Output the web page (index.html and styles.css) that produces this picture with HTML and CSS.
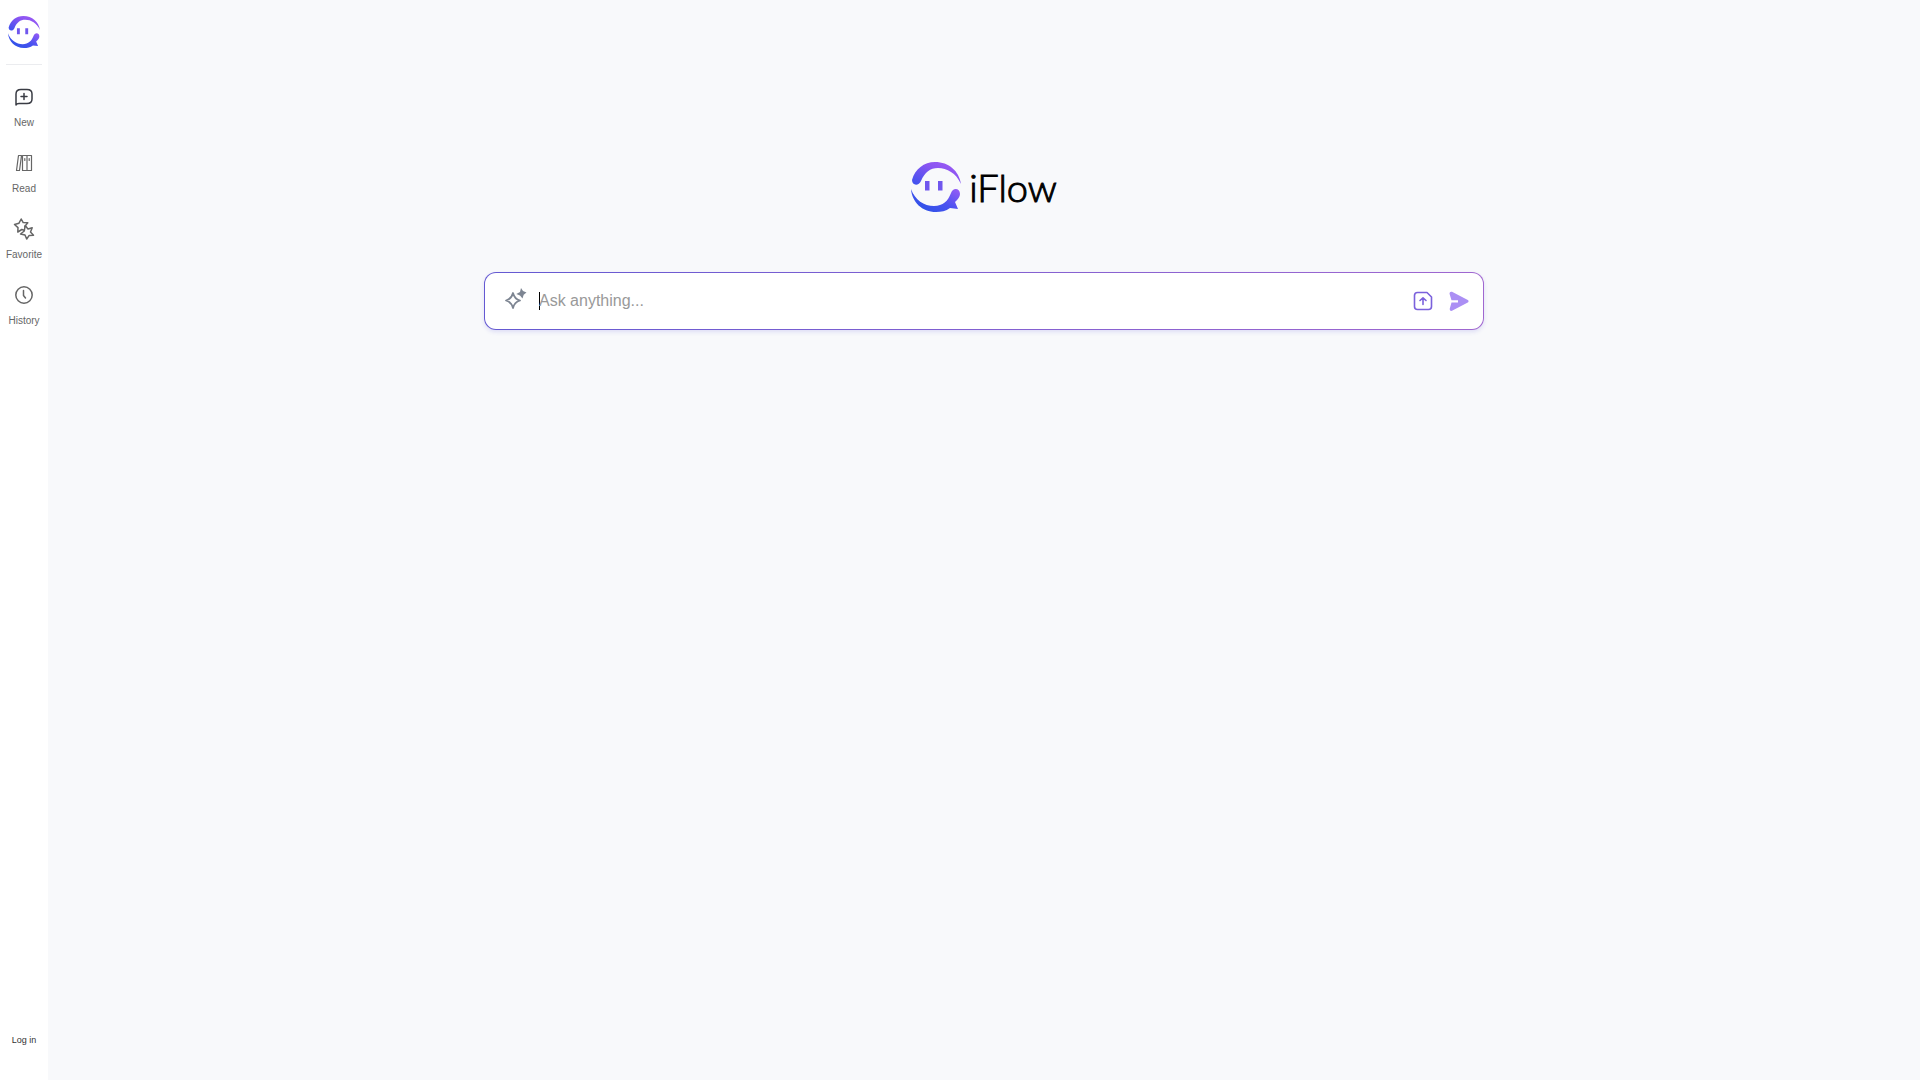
FILE: index.html
```
<!DOCTYPE html>
<html lang="en">
<head>
<meta charset="utf-8">
<title>iFlow</title>
<meta name="viewport" content="width=device-width, initial-scale=1">
<link rel="stylesheet" href="styles.css">
</head>
<body>
<!-- shared shapes -->
<svg class="defs" width="0" height="0" aria-hidden="true">
  <defs>
    <linearGradient id="markTop" x1="0" y1="1" x2="1" y2="0">
      <stop offset="0" stop-color="#3b52ee"/>
      <stop offset="0.6" stop-color="#8a55f2"/>
      <stop offset="1" stop-color="#a35cf4"/>
    </linearGradient>
    <linearGradient id="markBottom" x1="0" y1="0.8" x2="1" y2="0">
      <stop offset="0" stop-color="#2a52e6"/>
      <stop offset="0.5" stop-color="#4a52f0"/>
      <stop offset="1" stop-color="#9a5cf6"/>
    </linearGradient>
    <symbol id="mark" viewBox="0 0 50 50">
      <path fill="url(#markTop)" d="M1 18C4 7 13 0 24 0C38 0 48 9 50 22C45 11 36 6 27 6C19 6 14 10 10 19C8 24 1 24 1 18Z"/>
      <path fill="url(#markBottom)" d="M0 27C4 38 13 44 23 44C32 44 37 39 40 31C42 25 49 26 49 32C49 35 47 37 44 40L47 47L39 46C35 49 30 50 25 50C11 50 1 40 0 27Z"/>
      <path fill="#7057ee" d="M14 19h4.500v9.500h-4.500zM27 19h4.500v9.500h-4.500z"/>
    </symbol>
  </defs>
</svg>
<div class="page">
  <aside class="sidebar">
    <a class="home" href="#" aria-label="iFlow">
      <svg width="32" height="32"><use href="#mark"/></svg>
    </a>
    <nav class="menu">
      <a class="item" href="#">
        <svg class="dark" width="20" height="20" viewBox="0 0 20 20"><path d="M2 18V7Q2 2.500 7 2.500H13Q18 2.500 18 7V12Q18 16.500 13 16.500H5Q2.500 16.500 2 18M10 6.500v6M7 9.500h6"/></svg>
        <span>New</span>
      </a>
      <a class="item" href="#">
        <svg class="thin" width="20" height="20" viewBox="0 0 20 20"><path d="M4.500 2.500H7.500L5.500 17.500H2.500ZM8.500 2.500H17.500V17.500H8.500ZM13 2.500V17.500M10.800 5.500v2M15.200 5.500v2"/></svg>
        <span>Read</span>
      </a>
      <a class="item" href="#">
        <svg width="20" height="20" viewBox="0 0 20 20">
          <path d="M7.200 0L9.200 3.600L13.800 3.700L10.800 7.400L12.500 12L7.800 10.500L3.800 13L4 8.600L.5 5.500L5 4.200Z"/>
          <path class="front" d="M11.200 6.500L14 10L18.200 8.800L16.500 13L19.500 16.200L15.200 16.400L12.700 20L11 16L6.500 15L10.300 12Z"/>
        </svg>
        <span>Favorite</span>
      </a>
      <a class="item" href="#">
        <svg width="20" height="20" viewBox="0 0 20 20"><circle cx="10" cy="10" r="8.200"/><path d="M9.500 5.500V10.500L11.500 13"/></svg>
        <span>History</span>
      </a>
    </nav>
    <button class="login" type="button">Log in</button>
  </aside>
  <main class="main">
    <h1 class="logo">
      <svg width="50" height="50" aria-hidden="true"><use href="#mark"/></svg>
      <span>iFlow</span>
    </h1>
    <form class="search">
      <svg class="sparkle" width="22" height="22" viewBox="0 0 22 22" aria-hidden="true">
        <path class="outline" d="M8 5Q9.500 11 15 12.500Q9.500 14 8 20Q6.500 14 1 12.500Q6.500 11 8 5Z"/>
        <path class="solid" d="M16 0L18 3L21.500 4.500L18.700 6.800L17.500 10.500L15 7.500L11.300 6L15 4Z"/>
      </svg>
      <span class="caret"></span>
      <input class="query" type="text" placeholder="Ask anything..." aria-label="Ask anything">
      <button class="tool" type="button" aria-label="Upload">
        <svg class="upload" width="20" height="20" viewBox="0 0 20 20"><path d="M4.500 1.500H14L18.500 6V15.500Q18.500 18.500 15.500 18.500H4.500Q1.500 18.500 1.500 15.500V4.500Q1.500 1.500 4.500 1.500ZM10 13.500V7M7 9.500L10 6.800L13 9.500"/></svg>
      </button>
      <button class="tool" type="submit" aria-label="Send">
        <svg class="send" width="20" height="20" viewBox="0 0 20 20"><path d="M3 .8L18.800 9Q20.300 10.200 18.800 11.500L3 19.800Q.3 20.300 .8 17.500L2.500 11.500H9V9.300H2.500L.6 3Q.2 .2 3 .8Z"/></svg>
      </button>
    </form>
  </main>
</div>
</body>
</html>
```
FILE: styles.css
```
* {
  box-sizing: border-box;
}

body {
  margin: 0;
  font-family: "Liberation Sans", Arial, sans-serif;
  background: #f8f9fb;
}

a {
  text-decoration: none;
}

button {
  padding: 0;
  border: 0;
  background: none;
  font-family: inherit;
  cursor: pointer;
}

svg {
  display: block;
}

.defs {
  position: absolute;
}

.page {
  display: flex;
  min-height: 100vh;
}

/* sidebar */
.sidebar {
  display: flex;
  flex-direction: column;
  align-items: center;
  width: 48px;
  padding-bottom: 32px;
  background: #fff;
}

.home {
  padding: 16px 2px;
  border-bottom: 1px solid #ebecef;
}

.menu {
  display: flex;
  flex-direction: column;
  gap: 24px;
  padding-top: 22px;
}

.item {
  display: flex;
  flex-direction: column;
  align-items: center;
  gap: 10px;
  font-size: 10px;
  line-height: 12px;
  color: #666;
}

.item svg {
  overflow: visible;
  fill: none;
  stroke: #666;
  stroke-width: 1.5;
  stroke-linejoin: round;
  stroke-linecap: round;
}

.item .front {
  fill: #fff;
}

.item .dark {
  stroke: #3a3c44;
}

.item .thin {
  stroke-width: 1.2;
}

.login {
  margin-top: auto;
  font-size: 9px;
  line-height: 16px;
  color: #333;
}

/* content */
.main {
  display: flex;
  flex: 1;
  flex-direction: column;
  align-items: center;
  padding: 162px 24px 0;
}

.logo {
  display: flex;
  align-items: center;
  gap: 8px;
  margin: 0 0 60px;
  font-family: Lato, sans-serif;
  font-size: 38px;
  font-weight: 300;
  line-height: 48px;
  color: #000;
  -webkit-text-stroke: 1px #000;
}

/* gradient outline: white fill inside, gradient under the border */
.search {
  display: flex;
  align-items: center;
  width: 100%;
  max-width: 1000px;
  height: 58px;
  padding: 0 14px 0 20px;
  border: 1px solid transparent;
  border-radius: 12px;
  background: linear-gradient(#fff, #fff) padding-box, linear-gradient(90deg, #6459d2, #a067d0) border-box;
  box-shadow: 0 2px 4px rgba(90, 80, 220, 0.16);
}

.sparkle {
  margin: 0 12px 4px 0;
}

.outline {
  fill: none;
  stroke: #7d8592;
  stroke-width: 1.8;
  stroke-linejoin: round;
}

.solid {
  fill: #7d8592;
}

.caret {
  width: 1px;
  height: 18px;
  margin-right: -1px;
  background: #000;
}

.query {
  flex: 1;
  min-width: 0;
  padding: 0;
  border: 0;
  outline: 0;
  background: none;
  font-family: inherit;
  font-size: 16px;
  line-height: 24px;
  color: #222;
}

.query::placeholder {
  color: #999;
  opacity: 1;
}

.tool {
  margin-left: 16px;
}

.upload {
  fill: none;
  stroke: #7b61dc;
  stroke-width: 1.6;
  stroke-linecap: round;
  stroke-linejoin: round;
}

.send {
  fill: #ab8ff4;
}
```
